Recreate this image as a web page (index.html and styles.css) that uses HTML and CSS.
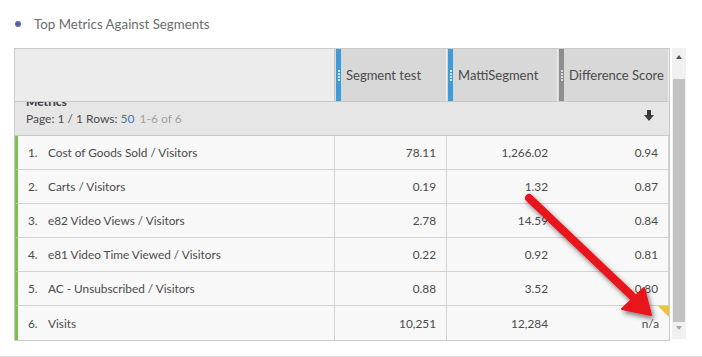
FILE: index.html
```html
<!DOCTYPE html>
<html>
<head>
<meta charset="utf-8">
<link rel="stylesheet" href="styles.css">
</head>
<body>
<div class="panel">
  <div class="title"><span class="dot"></span><span class="title-text">Top Metrics Against Segments</span></div>
  <div class="wrap">
    <div class="table">
      <div class="hcell hfirst"></div>
      <div class="hcell hseg"><span class="grip blue"><i></i><i></i><i></i><i></i></span><span class="htext">Segment test</span></div>
      <div class="hcell hseg"><span class="grip blue"><i></i><i></i><i></i><i></i></span><span class="htext">MattiSegment</span></div>
      <div class="hcell hseg"><span class="grip gray"><i></i><i></i><i></i><i></i></span><span class="htext">Difference Score</span></div>

      <div class="sub">
        <div class="sub-left">
          <div class="metrics">Metrics</div>
          <div class="page">Page: 1 / 1 Rows: <span class="rows">50</span> <span class="range">1-6 of 6</span></div>
        </div>
        <div class="sort">
          <svg width="10" height="11" viewBox="0 0 10 11"><rect x="3" y="0" width="4" height="6" fill="#3a3a3a"/><polygon points="0,5 10,5 5,11" fill="#3a3a3a"/></svg>
        </div>
      </div>

      <div class="cell label"><span class="num">1.</span>Cost of Goods Sold / Visitors</div>
      <div class="cell val">78.11</div>
      <div class="cell val">1,266.02</div>
      <div class="cell val">0.94</div>

      <div class="cell label"><span class="num">2.</span>Carts / Visitors</div>
      <div class="cell val">0.19</div>
      <div class="cell val">1.32</div>
      <div class="cell val">0.87</div>

      <div class="cell label"><span class="num">3.</span>e82 Video Views / Visitors</div>
      <div class="cell val">2.78</div>
      <div class="cell val">14.59</div>
      <div class="cell val">0.84</div>

      <div class="cell label"><span class="num">4.</span>e81 Video Time Viewed / Visitors</div>
      <div class="cell val">0.22</div>
      <div class="cell val">0.92</div>
      <div class="cell val">0.81</div>

      <div class="cell label"><span class="num">5.</span>AC - Unsubscribed / Visitors</div>
      <div class="cell val">0.88</div>
      <div class="cell val">3.52</div>
      <div class="cell val">0.80</div>

      <div class="cell label last"><span class="num">6.</span>Visits</div>
      <div class="cell val last">10,251</div>
      <div class="cell val last">12,284</div>
      <div class="cell val last flag">n/a</div>
    </div>
    <div class="scrollbar">
      <div class="sb-up"></div>
      <div class="sb-track"><div class="sb-thumb"></div></div>
      <div class="sb-down"></div>
    </div>
  </div>
  <div class="rule"></div>
</div>
<svg class="arrow" width="702" height="357" viewBox="0 0 702 357">
  <defs>
    <filter id="sh" x="-20%" y="-20%" width="140%" height="140%">
      <feDropShadow dx="2" dy="3" stdDeviation="2.5" flood-color="#000" flood-opacity="0.5"/>
    </filter>
  </defs>
  <g filter="url(#sh)" fill="#e8131a" stroke="#e8131a">
    <line x1="529" y1="198" x2="632" y2="296" stroke-width="8" stroke-linecap="round"/>
    <polygon points="651,315 622,309 644,288" stroke-width="2" stroke-linejoin="round"/>
  </g>
</svg>
</body>
</html>
```

FILE: styles.css
```css
* { box-sizing: border-box; }
body {
  margin: 0;
  background: #fff;
  font-family: Lato, "Open Sans", Arial, sans-serif;
  color: #4b4b4b;
  width: 702px;
  height: 357px;
  overflow: hidden;
  position: relative;
}
.panel { padding-top: 14px; }
.title {
  display: flex;
  align-items: center;
  height: 20px;
  padding-left: 14px;
  margin-bottom: 14px;
}
.dot {
  width: 6px; height: 6px; border-radius: 50%;
  background: #5d63a6;
  margin-right: 13px;
  margin-left: 1px;
}
.title-text { font-size: 13.3px; color: #6b6b6b; }
.wrap {
  display: flex;
  padding-left: 14px;
  align-items: flex-start;
}
.table {
  display: grid;
  grid-template-columns: 320px 112px 111px 111px;
  grid-auto-rows: 34px;
  grid-template-rows: 53px 34px;
  border: 1px solid #cbcbcb;
  width: 656px;
}
.hcell {
  background: #d8d8d8;
  border-bottom: 1px solid #c8c8c8;
  display: flex;
  align-items: stretch;
  font-size: 13px;
  color: #4a4a4a;
}
.hfirst { background: #ececec; border-right: 1px solid #c8c8c8; }
.hseg { border-right: 1px solid #ececec; }
.hseg:last-of-type { border-right: none; }
.grip {
  width: 5px;
  margin-left: 1px;
  display: flex;
  flex-direction: column;
  justify-content: center;
  align-items: center;
  gap: 1px;
}
.grip i { display: block; width: 2px; height: 2px; background: #d6e9f7; }
.grip.blue { background: #3e9bd7; }
.grip.gray { background: #8e8e8e; }
.grip.gray i { background: #dcdcdc; }
.htext { display: flex; align-items: center; padding-left: 5px; }
.sub {
  grid-column: 1 / 5;
  background: #e6e6e6;
  border-bottom: 1px solid #c8c8c8;
  display: flex;
  justify-content: space-between;
  overflow: hidden;
}
.sub-left { padding-left: 11px; margin-top: -7px; }
.metrics { font-size: 12px; font-weight: 900; line-height: 14px; color: #444; }
.page { font-size: 12px; line-height: 14px; margin-top: 3px; color: #4a4a4a; }
.rows { color: #4a6fc7; }
.range { color: #a0a0a0; margin-left: 2px; }
.sort { padding: 3px 15px 0 0; }
.cell {
  background: #f8f8f8;
  border-bottom: 1px solid #d2d2d2;
  border-right: 1px solid #d2d2d2;
  display: flex;
  align-items: center;
  font-size: 11.8px;
  color: #4a4a4a;
}
.cell.last { border-bottom: none; }
.cell.val { justify-content: flex-end; padding-right: 10px; }
.cell.val:nth-child(4n+8), .cell.flag { border-right: none; }
.label { border-left: 3px solid #7cc24a; padding-left: 10px; }
.num { width: 20px; }
.flag { position: relative; }
.flag::after {
  content: "";
  position: absolute;
  top: 0; right: 0;
  border-style: solid;
  border-width: 0 11px 11px 0;
  border-color: transparent #f0be41 transparent transparent;
}
.scrollbar {
  width: 14px;
  margin-left: 2px;
  height: 291px;
  background: #f1f1f1;
  display: flex;
  flex-direction: column;
  align-items: center;
}
.sb-up {
  margin-top: 7px;
  width: 0; height: 0;
  border-left: 3.5px solid transparent;
  border-right: 3.5px solid transparent;
  border-bottom: 4px solid #555;
}
.sb-track { flex: 1; width: 100%; padding: 20px 1px 0; }
.sb-thumb { height: 243px; background: #c2c2c2; }
.sb-down {
  margin: 4px 0 9px;
  width: 0; height: 0;
  border-left: 3.5px solid transparent;
  border-right: 3.5px solid transparent;
  border-top: 4px solid #a8a8a8;
}
.rule { height: 1px; background: #e2e2e2; margin-top: 15px; }
.arrow { position: absolute; left: 0; top: 0; pointer-events: none; }
```
